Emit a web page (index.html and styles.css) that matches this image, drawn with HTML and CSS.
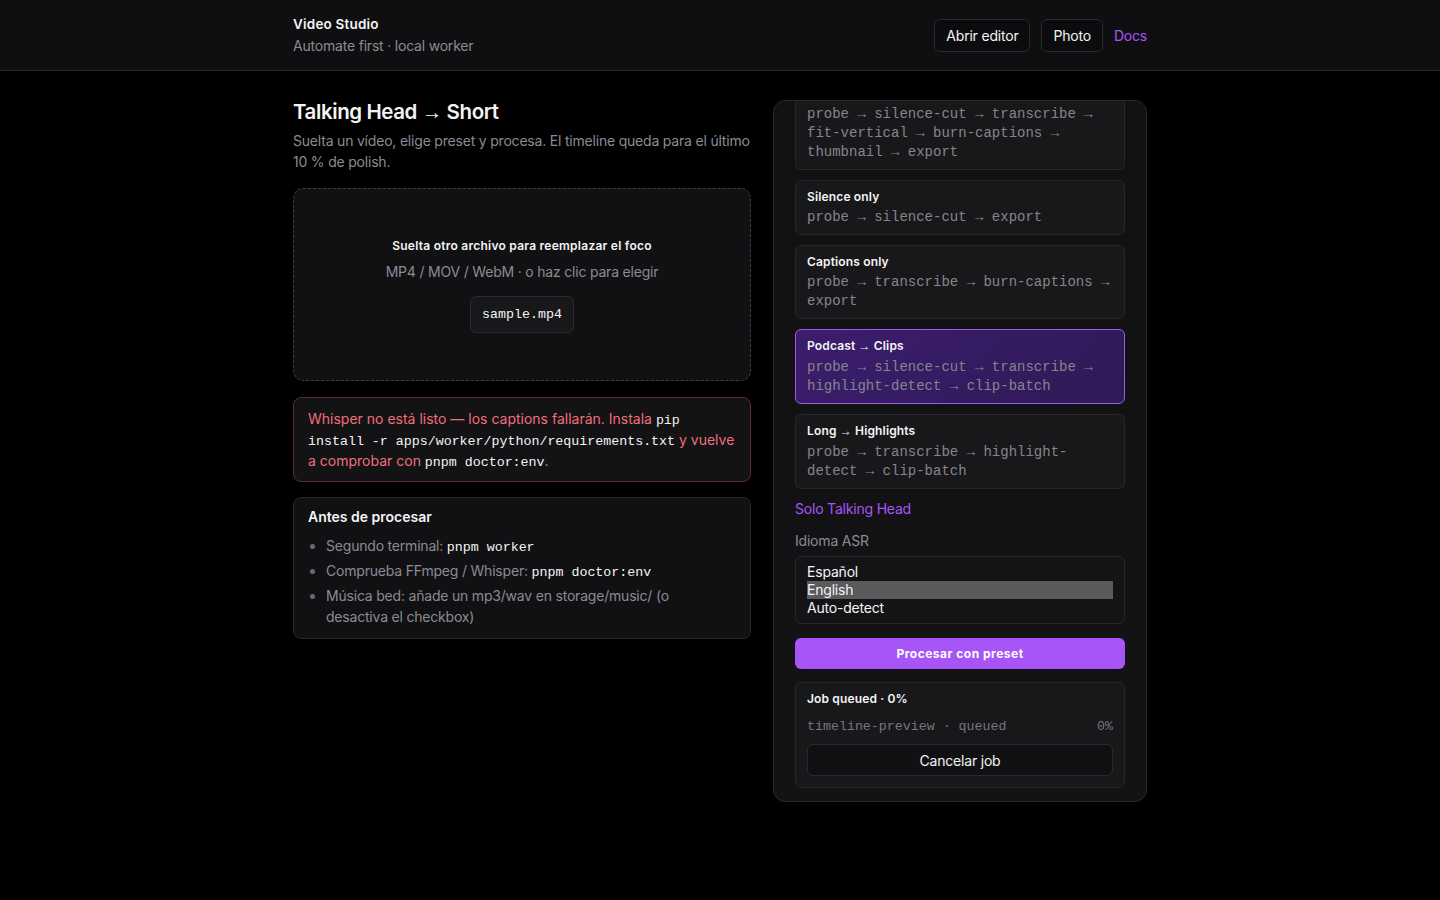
FILE: index.html
```html
<!DOCTYPE html>
<html lang="es">
<head>
    <meta charset="UTF-8">
    <meta name="viewport" content="width=device-width, initial-scale=1.0">
    <title>Video Studio</title>
    <link rel="stylesheet" href="styles.css">
</head>
<body>
<header class="topbar">
    <div class="topbar-inner">
        <div class="brand">
            <div class="brand-name">Video Studio</div>
            <div class="brand-sub">Automate first · local worker</div>
        </div>
        <nav class="nav">
            <button class="ghost">Abrir editor</button>
            <button class="ghost">Photo</button>
            <a class="link" href="#">Docs</a>
        </nav>
    </div>
</header>

<main class="layout">
    <section class="main-col">
        <h1 class="title">Talking Head <span class="arr">→</span> Short</h1>
        <p class="lead">Suelta un vídeo, elige preset y procesa. El timeline queda para el último 10 % de polish.</p>

        <div class="dropzone">
            <div class="drop-title">Suelta otro archivo para reemplazar el foco</div>
            <div class="drop-hint">MP4 / MOV / WebM · o haz clic para elegir</div>
            <div class="file-chip">sample.mp4</div>
        </div>

        <div class="alert">
            Whisper no está listo — los captions fallarán. Instala <code>pip install -r apps/worker/python/requirements.txt</code> y vuelve a comprobar con <code>pnpm doctor:env</code>.
        </div>

        <div class="box">
            <div class="box-title">Antes de procesar</div>
            <ul class="checklist">
                <li>Segundo terminal: <code>pnpm worker</code></li>
                <li>Comprueba FFmpeg / Whisper: <code>pnpm doctor:env</code></li>
                <li>Música bed: añade un mp3/wav en storage/music/ (o desactiva el checkbox)</li>
            </ul>
        </div>
    </section>

    <aside class="panel">
        <div class="panel-inner">
            <div class="panel-label">Preset</div>
            <div class="presets">
                <div class="preset">
                    <div class="preset-name">Talking Head <span class="arr">→</span> Short</div>
                    <div class="preset-steps">probe → silence-cut → transcribe → fit-vertical → burn-captions → thumbnail → export</div>
                </div>
                <div class="preset">
                    <div class="preset-name">Silence only</div>
                    <div class="preset-steps">probe → silence-cut → export</div>
                </div>
                <div class="preset">
                    <div class="preset-name">Captions only</div>
                    <div class="preset-steps">probe → transcribe → burn-captions → export</div>
                </div>
                <div class="preset active">
                    <div class="preset-name">Podcast <span class="arr">→</span> Clips</div>
                    <div class="preset-steps">probe → silence-cut → transcribe → highlight-detect → clip-batch</div>
                </div>
                <div class="preset">
                    <div class="preset-name">Long <span class="arr">→</span> Highlights</div>
                    <div class="preset-steps">probe → transcribe → highlight-detect → clip-batch</div>
                </div>
            </div>

            <a class="link solo" href="#">Solo Talking Head</a>

            <label class="field-label" for="lang">Idioma ASR</label>
            <select class="listbox" id="lang" size="3">
                <option>Español</option>
                <option selected>English</option>
                <option>Auto-detect</option>
            </select>

            <button class="primary">Procesar con preset</button>

            <div class="job">
                <div class="job-title">Job queued · 0%</div>
                <div class="job-row">
                    <span>timeline-preview · queued</span>
                    <span>0%</span>
                </div>
                <button class="ghost wide">Cancelar job</button>
            </div>
        </div>
    </aside>
</main>
</body>
</html>
```

FILE: styles.css
```css
body {
    margin: 0;
    background-color: #000;
    color: #f4f4f5;
    font-family: Inter, "Noto Sans", sans-serif;
    font-size: 14px;
    line-height: 21px;
    letter-spacing: -0.2px;
}

code {
    font-family: "Liberation Mono", monospace;
    font-size: 13.3px;
    line-height: 1;
    letter-spacing: 0;
    color: #f4f4f5;
}

button {
    font-family: inherit;
    letter-spacing: inherit;
    cursor: pointer;
}

.arr {
    font-family: "Liberation Sans", sans-serif;
    font-weight: 400;
}

.link {
    color: #a855f7;
    text-decoration: none;
}

/* header */

.topbar {
    background-color: #0f0f11;
    border-bottom: 1px solid #26262a;
}

.topbar-inner {
    width: 854px;
    margin: 0 auto;
    padding: 14px 0;
    display: flex;
    align-items: center;
    justify-content: space-between;
}

.brand-name {
    font-size: 13.5px;
    font-weight: 600;
    letter-spacing: 0.2px;
}

.brand-sub {
    color: #8b8b93;
}

.nav {
    display: flex;
    align-items: center;
    gap: 11px;
}

.ghost {
    background-color: #0c0c0e;
    color: #f4f4f5;
    border: 1px solid #2a2a2e;
    border-radius: 6px;
    padding: 0 11px;
    height: 33px;
    font-size: 14px;
}

/* layout */

.layout {
    width: 854px;
    margin: 0 auto;
    padding-top: 29px;
    display: grid;
    grid-template-columns: minmax(0, 1fr) 374px;
    gap: 22px;
    align-items: start;
}

.title {
    margin: 0;
    font-size: 20.5px;
    line-height: 24px;
    font-weight: 600;
    letter-spacing: -0.02em;
}

.lead {
    margin: 6px 0 16px;
    color: #8b8b93;
}

.dropzone {
    height: 193px;
    box-sizing: border-box;
    border: 1px dashed #3d3d44;
    border-radius: 10px;
    background-color: #111113;
    display: flex;
    flex-direction: column;
    align-items: center;
    justify-content: center;
    padding-top: 2px;
}

.drop-title {
    font-size: 12px;
    line-height: 16px;
    font-weight: 600;
    letter-spacing: 0.25px;
}

.drop-hint {
    margin-top: 8px;
    color: #8b8b93;
    line-height: 20px;
}

.file-chip {
    margin-top: 14px;
    font-family: "Liberation Mono", monospace;
    font-size: 13.3px;
    line-height: 19px;
    letter-spacing: 0;
    padding: 8px 11px;
    background-color: #18181b;
    border: 1px solid #2a2a2e;
    border-radius: 6px;
}

.alert {
    margin-top: 16px;
    padding: 10px 14px;
    border: 1px solid #5e2a34;
    border-radius: 8px;
    background-color: #131214;
    color: #ef6f7b;
    letter-spacing: 0;
}

.box {
    margin-top: 15px;
    padding: 10px 14px 11px;
    border: 1px solid #27272a;
    border-radius: 8px;
    background-color: #111113;
}

.box-title {
    font-weight: 600;
    line-height: 18px;
    letter-spacing: 0;
}

.checklist {
    margin: 9px 0 0;
    padding: 0 8px 0 18px;
    color: #8b8b93;
}

.checklist li + li {
    margin-top: 4px;
}

.checklist li::marker {
    color: #6b6b73;
}

/* side panel */

.panel {
    height: 702px;
    box-sizing: border-box;
    border: 1px solid #27272a;
    border-radius: 12px;
    background: linear-gradient(180deg, #111113, #131316);
    overflow: hidden;
    display: flex;
    flex-direction: column;
    justify-content: flex-end;
}

.panel-inner {
    flex-shrink: 0;
    padding: 14px 21px 13px;
    display: flex;
    flex-direction: column;
}

.panel-label {
    color: #8b8b93;
    margin-bottom: 8px;
}

.presets {
    display: flex;
    flex-direction: column;
    gap: 10px;
}

.preset {
    padding: 8px 11px 7px;
    background-color: #18181b;
    border: 1px solid #27272a;
    border-radius: 6px;
}

.preset.active {
    background: linear-gradient(135deg, #3c1d6e, #2f1a56);
    border-color: #9b5de5;
}

.preset-name {
    font-size: 12px;
    line-height: 15px;
    font-weight: 600;
    letter-spacing: 0.15px;
}

.preset-steps {
    margin-top: 4px;
    font-family: "Liberation Mono", monospace;
    font-size: 14px;
    line-height: 19px;
    letter-spacing: 0;
    color: #85858d;
}

.solo {
    margin-top: 11px;
    line-height: 18px;
}

.field-label {
    margin-top: 14px;
    color: #8b8b93;
    line-height: 18px;
}

.listbox {
    margin-top: 6px;
    padding: 6px 11px;
    background-color: #141417;
    color: #f4f4f5;
    border: 1px solid #27272a;
    border-radius: 6px;
    font-family: inherit;
    font-size: 14px;
    letter-spacing: inherit;
    overflow: hidden;
    outline: none;
}

.listbox option {
    padding: 0;
    line-height: 18px;
    min-height: 18px;
}

.listbox option:checked {
    background: #5b5b5e linear-gradient(#5b5b5e, #5b5b5e);
    color: #f4f4f5;
}

.primary {
    margin-top: 14px;
    height: 31px;
    border: none;
    border-radius: 6px;
    background-color: #a855f7;
    color: #fff;
    font-size: 12px;
    font-weight: 700;
    letter-spacing: 0.5px;
}

.job {
    margin-top: 13px;
    padding: 8px 11px 11px;
    background-color: #18181b;
    border: 1px solid #27272a;
    border-radius: 6px;
}

.job-title {
    font-size: 12px;
    line-height: 16px;
    font-weight: 600;
    letter-spacing: 0.15px;
}

.job-row {
    margin-top: 10px;
    display: flex;
    justify-content: space-between;
    font-family: "Liberation Mono", monospace;
    font-size: 13.3px;
    line-height: 20px;
    letter-spacing: 0;
    color: #76767e;
}

.wide {
    margin-top: 7px;
    width: 100%;
    height: 32px;
    background-color: #111113;
}
```
